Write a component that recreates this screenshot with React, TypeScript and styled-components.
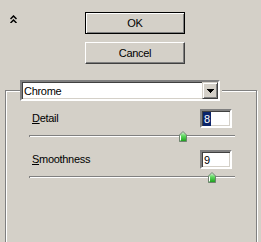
import React from 'react';
import styled, { createGlobalStyle } from 'styled-components';

const GlobalStyle = createGlobalStyle`
  html, body {
    margin: 0;
    padding: 0;
    background: #d4d0c8;
  }
  body {
    font-family: "Liberation Sans", Arial, sans-serif;
    font-size: 11px;
    letter-spacing: -0.3px;
    color: #000;
  }
`;

const params = [
  { key: 'D', rest: 'etail', value: '8', selected: true, thumb: 150 },
  { key: 'S', rest: 'moothness', value: '9', selected: false, thumb: 179 },
];

const App = () => {
  return (
    <Window>
      <GlobalStyle />
      <TopBar>
        <CollapseArea>
          <svg width="7" height="8" viewBox="0 0 7 8">
            <polyline points="0.5,4 3.5,1 6.5,4" fill="none" stroke="#000" strokeWidth="1.5" />
            <polyline points="0.5,8 3.5,5 6.5,8" fill="none" stroke="#000" strokeWidth="1.5" />
          </svg>
        </CollapseArea>
        <ButtonColumn>
          <Button $default>OK</Button>
          <Button>Cancel</Button>
        </ButtonColumn>
      </TopBar>

      <Group>
        <Legend>
          <Combo>
            <ComboText>Chrome</ComboText>
            <ArrowButton>
              <svg width="7" height="4" viewBox="0 0 7 4">
                <path d="M0 0h7v1H0z M1 1h5v1H1z M2 2h3v1H2z M3 3h1v1H3z" fill="#000" />
              </svg>
            </ArrowButton>
          </Combo>
        </Legend>

        {params.map((p) => (
          <div key={p.key}>
            <ParamRow>
              <Label>
                <u>{p.key}</u>
                {p.rest}
              </Label>
              <ValueBox>
                <ValueText $selected={p.selected}>{p.value}</ValueText>
              </ValueBox>
            </ParamRow>
            <Slider>
              <Track />
              <Thumb style={{ left: p.thumb }}>
                <svg width="8" height="11" viewBox="0 0 8 11">
                  <defs>
                    <linearGradient id={`g${p.key}`} x1="0" y1="0" x2="0" y2="1">
                      <stop offset="0" stopColor="#e6f6e6" />
                      <stop offset="0.45" stopColor="#5fd85f" />
                      <stop offset="1" stopColor="#1a9c1a" />
                    </linearGradient>
                  </defs>
                  <polygon
                    points="0.5,4 4,0.5 7.5,4 7.5,10.5 0.5,10.5"
                    fill={`url(#g${p.key})`}
                    stroke="#6f8270"
                    strokeWidth="1"
                  />
                  <line x1="1.5" y1="4.5" x2="1.5" y2="9.5" stroke="#fff" strokeWidth="1" />
                </svg>
              </Thumb>
            </Slider>
          </div>
        ))}
      </Group>
    </Window>
  );
};

const Window = styled.div`
  width: 261px;
  height: 242px;
  overflow: hidden;
  background: #d4d0c8;
`;

const TopBar = styled.div`
  display: flex;
  box-sizing: border-box;
  height: 80px;
  padding-top: 12px;
`;

const CollapseArea = styled.div`
  width: 85px;
  box-sizing: border-box;
  padding: 3px 0 0 10px;

  svg {
    display: block;
  }
`;

const ButtonColumn = styled.div`
  display: flex;
  flex-direction: column;
  gap: 8px;
`;

interface ButtonProps {
  $default?: boolean;
}

const Button = styled.div<ButtonProps>`
  width: 100px;
  height: 22px;
  box-sizing: border-box;
  display: flex;
  align-items: center;
  justify-content: center;
  background: #d4d0c8;
  border: 1px solid;
  border-color: ${({ $default }) => ($default ? '#000' : '#fff #404040 #404040 #fff')};
  box-shadow: ${({ $default }) =>
    $default
      ? 'inset 1px 1px 0 #fff, inset -1px -1px 0 #808080'
      : 'inset -1px -1px 0 #808080'};
  cursor: default;
  user-select: none;
`;

const Group = styled.fieldset`
  margin: 0 0 0 5px;
  width: 252px;
  height: 200px;
  min-width: 0;
  box-sizing: border-box;
  padding: 0 21px 0 14px;
  border: 1px solid #808080;
  box-shadow: 1px 1px 0 #fff, inset 1px 1px 0 #fff;
`;

const Legend = styled.legend`
  margin: 0;
  padding: 0 2px 0 0;
  background: #d4d0c8;
`;

const sunken = `
  border: 2px solid;
  border-color: #808080 #fff #fff #808080;
  box-shadow: inset 1px 1px 0 #404040, inset -1px -1px 0 #d4d0c8;
  background: #fff;
`;

const Combo = styled.div`
  ${sunken}
  width: 200px;
  height: 21px;
  box-sizing: border-box;
  display: flex;
  align-items: center;
  padding-left: 2px;
`;

const ComboText = styled.span`
  flex: 1;
`;

const ArrowButton = styled.div`
  width: 16px;
  height: 17px;
  box-sizing: border-box;
  display: flex;
  align-items: center;
  justify-content: center;
  background: #d4d0c8;
  border: 1px solid;
  border-color: #d4d0c8 #404040 #404040 #d4d0c8;
  box-shadow: inset 1px 1px 0 #fff, inset -1px -1px 0 #808080;

  svg {
    display: block;
  }
`;

const ParamRow = styled.div`
  display: flex;
  align-items: center;
  justify-content: space-between;
  height: 19px;
  margin-top: 8px;
`;

const Label = styled.span`
  margin-left: 12px;
  line-height: 13px;
`;

const ValueBox = styled.div`
  ${sunken}
  width: 32px;
  height: 19px;
  box-sizing: border-box;
  display: flex;
  align-items: center;
  padding-left: 1px;
  margin-right: 3px;
`;

interface ValueTextProps {
  $selected?: boolean;
}

const ValueText = styled.span<ValueTextProps>`
  line-height: 14px;
  padding: 0 1px;
  background: ${({ $selected }) => ($selected ? '#0a246a' : 'transparent')};
  color: ${({ $selected }) => ($selected ? '#fff' : '#000')};
`;

const Slider = styled.div`
  position: relative;
  height: 14px;
  margin-left: 9px;
  padding-top: 7px;
  box-sizing: border-box;
`;

const Track = styled.div`
  height: 2px;
  box-sizing: border-box;
  border-top: 1px solid #808080;
  border-left: 1px solid #808080;
  background: #fff;
`;

const Thumb = styled.div`
  position: absolute;
  top: 3px;

  svg {
    display: block;
  }
`;

export default App;
